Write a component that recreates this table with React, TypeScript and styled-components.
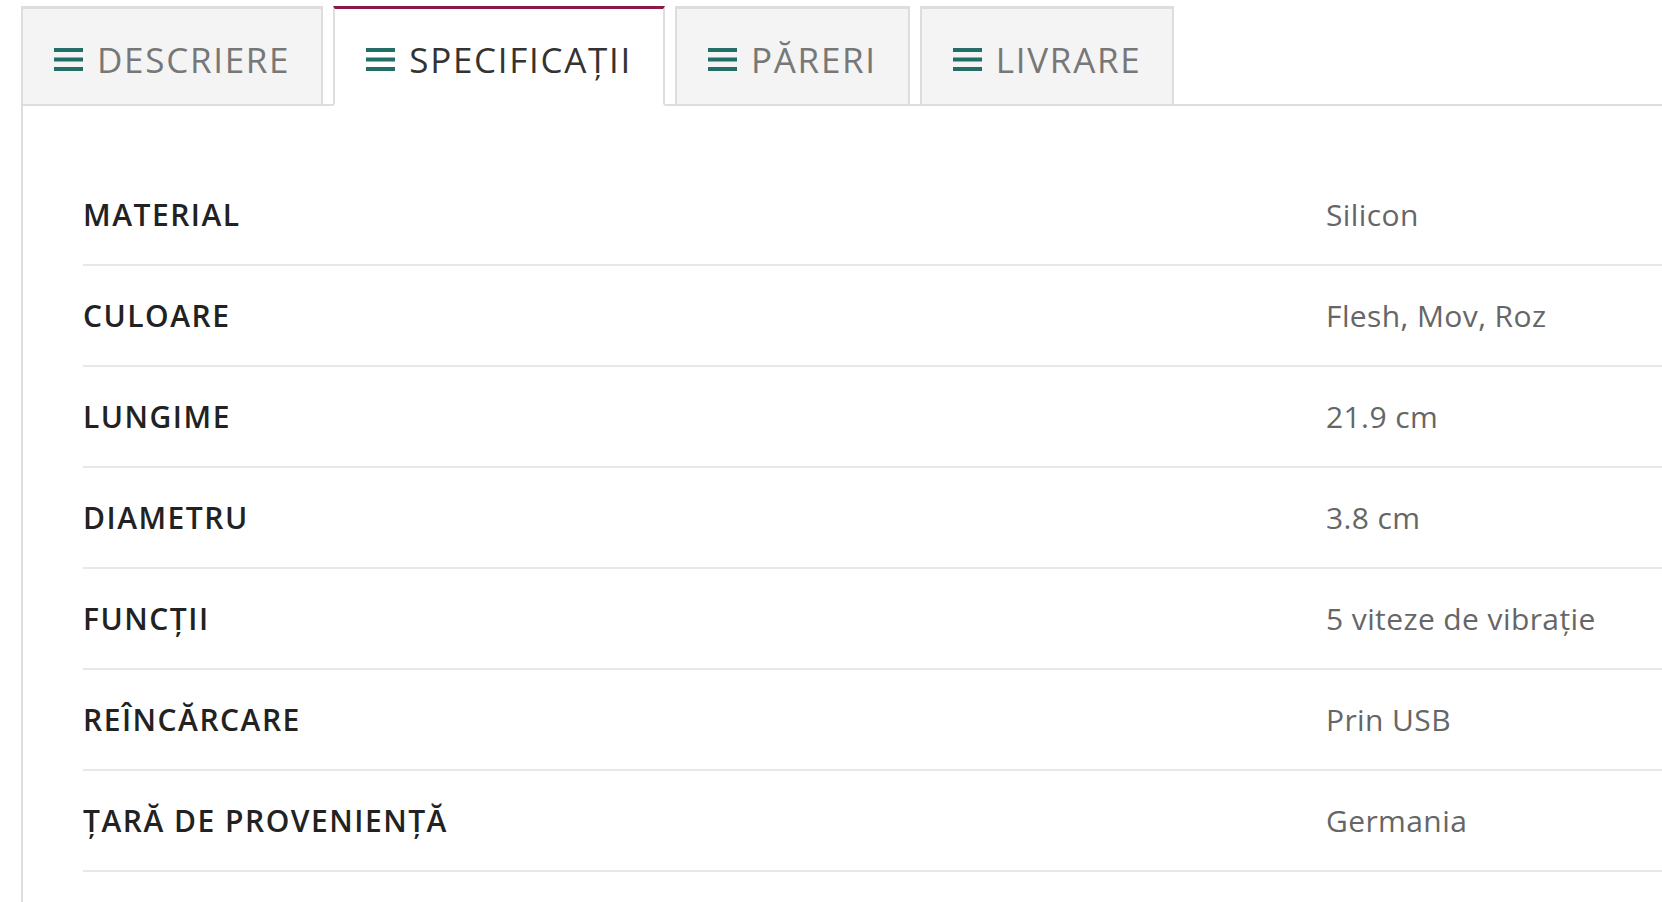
import React, { useState } from "react";
import styled, { createGlobalStyle, css } from "styled-components";

const GlobalStyle = createGlobalStyle`
  html, body {
    margin: 0;
    padding: 0;
    background: #ffffff;
    overflow: hidden;
  }
  body {
    font-family: "Open Sans", "Liberation Sans", sans-serif;
  }
`;

const Page = styled.div`
  padding: 6px 0 0 21px;
  box-sizing: border-box;
  min-height: 902px;
`;

const TabList = styled.div`
  display: flex;
  gap: 10px;
  position: relative;
  z-index: 1;
  margin-bottom: -2px;
`;

const Tab = styled.button<{ $active: boolean }>`
  display: flex;
  align-items: center;
  gap: 14px;
  box-sizing: border-box;
  height: 100px;
  padding: 5px 31px 0 31px;
  margin: 0;
  border: 2px solid #dddddd;
  border-top-width: 3px;
  background: #f4f4f4;
  color: #777777;
  font-family: "Open Sans", "Liberation Sans", sans-serif;
  font-size: 35px;
  font-weight: 500;
  letter-spacing: 1.7px;
  text-transform: uppercase;
  cursor: pointer;
  outline: none;

  ${(p) =>
    p.$active &&
    css`
      background: #ffffff;
      color: #333333;
      border-top-color: #8c1848;
      border-bottom-color: #ffffff;
    `}
`;

const Panel = styled.div`
  border-top: 2px solid #dddddd;
  border-left: 2px solid #dddddd;
  padding: 59px 0 40px 60px;
  min-height: 820px;
  box-sizing: border-box;
`;

const SpecRow = styled.div`
  display: grid;
  grid-template-columns: 1243px 1fr;
  align-items: center;
  height: 101px;
  box-sizing: border-box;
  border-bottom: 2px solid #e8e8e8;
`;

const Label = styled.div`
  font-size: 30px;
  font-weight: 600;
  letter-spacing: 1.5px;
  color: #222222;
  text-transform: uppercase;
  white-space: nowrap;
`;

const Value = styled.div`
  font-size: 30px;
  font-weight: 500;
  letter-spacing: 0.4px;
  color: #666666;
  white-space: nowrap;
`;

const BarsIcon = () => (
  <svg width="29" height="23" viewBox="0 0 29 23" aria-hidden="true">
    <rect x="0" y="0" width="29" height="4" fill="#236e66" />
    <rect x="0" y="9.5" width="29" height="4" fill="#236e66" />
    <rect x="0" y="19" width="29" height="4" fill="#236e66" />
  </svg>
);

const tabs = ["Descriere", "Specificații", "Păreri", "Livrare"];

const specs: [string, string][] = [
  ["Material", "Silicon"],
  ["Culoare", "Flesh, Mov, Roz"],
  ["Lungime", "21.9 cm"],
  ["Diametru", "3.8 cm"],
  ["Funcții", "5 viteze de vibrație"],
  ["Reîncărcare", "Prin USB"],
  ["Țară de proveniență", "Germania"],
];

export default function App() {
  const [active, setActive] = useState(1);
  return (
    <>
      <GlobalStyle />
      <Page>
        <TabList>
          {tabs.map((t, i) => (
            <Tab key={t} $active={i === active} onClick={() => setActive(i)}>
              <BarsIcon />
              <span>{t}</span>
            </Tab>
          ))}
        </TabList>
        <Panel>
          {specs.map(([k, v]) => (
            <SpecRow key={k}>
              <Label>{k}</Label>
              <Value>{v}</Value>
            </SpecRow>
          ))}
        </Panel>
      </Page>
    </>
  );
}
